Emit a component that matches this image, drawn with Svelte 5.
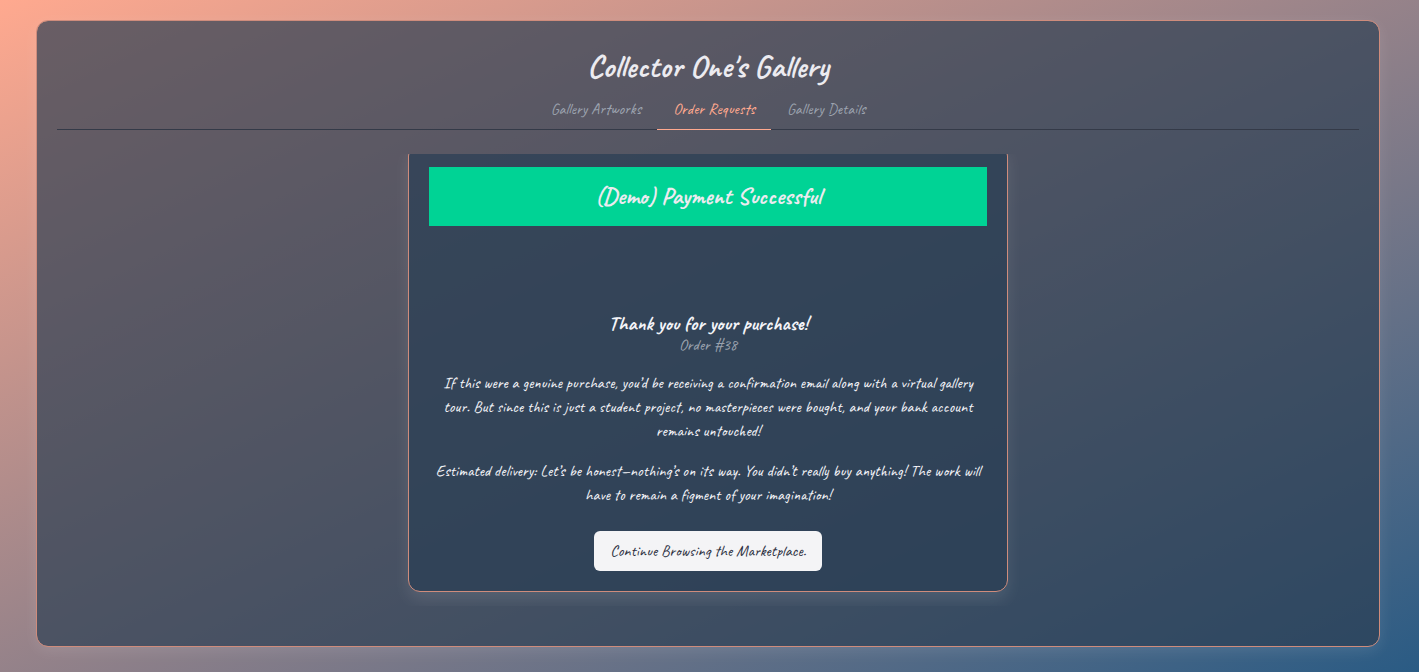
<script>
  const tabs = ['Gallery Artworks', 'Order Requests', 'Gallery Details'];
  let active = $state('Order Requests');
</script>

<main class="panel">
  <h1>Collector One's Gallery</h1>
  <nav aria-label="Gallery sections">
    {#each tabs as tab}
      <button class="tab" class:active={tab === active} onclick={() => (active = tab)}>{tab}</button>
    {/each}
  </nav>

  <div class="viewport">
    <section class="card">
      <h2 class="banner">(Demo) Payment Successful</h2>
      <div class="message">
        <h3>Thank you for your purchase!</h3>
        <p class="order">Order #38</p>
        <p>
          If this were a genuine purchase, you’d be receiving a confirmation email along with a virtual gallery
          tour. But since this is just a student project, no masterpieces were bought, and your bank account
          remains untouched!
        </p>
        <p>
          <strong>Estimated delivery:</strong> Let’s be honest—nothing’s on its way. You didn’t really buy anything! The work will
          have to remain a figment of your imagination!
        </p>
      </div>
      <a class="continue" href="#marketplace">Continue Browsing the Marketplace.</a>
    </section>
  </div>
</main>

<style>
  :global(html) {
    height: 100%;
  }
  :global(body) {
    min-height: 100vh;
    display: flow-root;
    background: linear-gradient(to bottom right, #ffa98f, #2a5b84);
    font-family: Caveat, cursive;
    text-rendering: geometricPrecision;
    color: #f4f4f8;
  }
  :global(*) {
    box-sizing: border-box;
  }
  h1, h2, h3, p {
    margin: 0;
  }
  .panel {
    min-height: calc(100vh - 45px);
    margin: 20px 39px 25px 36px;
    padding: 26px 20px 20px;
    border: 1px solid #cf8c7c;
    border-radius: 12px;
    background: rgba(44, 63, 82, 0.7);
    background-clip: padding-box;
    box-shadow: 0 4px 15px rgba(255, 255, 255, 0.1);
  }
  h1 {
    font-size: 32px;
    line-height: 40px;
    text-align: center;
    color: #ecebf0;
  }
  nav {
    display: flex;
    justify-content: center;
    border-bottom: 1px solid #343a48;
  }
  .tab {
    height: 43px;
    margin-bottom: -1px;
    padding: 2px 16px 0;
    border: 0;
    border-bottom: 1px solid transparent;
    background: none;
    font: inherit;
    font-size: 16px;
    color: #9ca3af;
  }
  .tab.active {
    color: #ffa98f;
    border-bottom-color: #ffa98f;
  }
  .viewport {
    margin-top: 24px;
    padding: 0 20px 14px;
    overflow: hidden;
  }
  .card {
    max-width: 600px;
    margin: -10px auto 0;
    padding: 22px 20px 20px;
    border: 1px solid #cf8c7c;
    border-radius: 12px;
    background: rgba(42, 63, 85, 0.72);
    background-clip: padding-box;
    box-shadow: 0 8px 16px rgba(255, 255, 255, 0.1);
    text-align: center;
  }
  .banner {
    margin-bottom: 86px;
    padding-top: 2px;
    font-size: 24px;
    line-height: 57px;
    background: #00d395;
    color: #ecebf0;
  }
  .message {
    margin-bottom: 24px;
    font-size: 16px;
    line-height: 24px;
  }
  .message p + p {
    margin-top: 16px;
  }
  h3 {
    font-size: 20px;
    line-height: 24px;
  }
  .message .order {
    line-height: 19px;
    color: #9ca3af;
  }
  strong {
    font-weight: 500;
  }
  .continue {
    display: inline-block;
    padding: 0 16px;
    border-radius: 6px;
    background: #f4f4f6;
    color: #2d3142;
    font-size: 16px;
    font-weight: 500;
    line-height: 40px;
    text-decoration: none;
    vertical-align: top;
  }
</style>
